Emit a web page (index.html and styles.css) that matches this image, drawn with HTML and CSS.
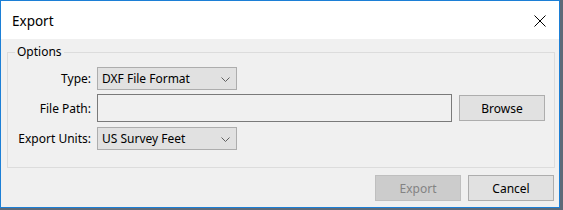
FILE: index.html
```html
<!DOCTYPE html>
<html>
<head>
<meta charset="utf-8">
<link rel="stylesheet" href="styles.css">
</head>
<body>
<div class="window">
  <div class="titlebar">
    <span class="title">Export</span>
    <span class="close">
      <svg width="12" height="12" viewBox="0 0 12 12"><path d="M0.5 0.5 L11.5 11.5 M11.5 0.5 L0.5 11.5" stroke="#000" stroke-width="1" fill="none"/></svg>
    </span>
  </div>
  <div class="content">
    <fieldset class="group">
      <legend class="legend">Options</legend>
      <div class="rows">
        <div class="row">
          <label class="label">Type:</label>
          <div class="select">
            <span class="select-text">DXF File Format</span>
            <svg class="chev" width="9" height="5" viewBox="0 0 9 5"><path d="M0.5 0.5 L4.5 4.5 L8.5 0.5" stroke="#606060" stroke-width="1" fill="none"/></svg>
          </div>
        </div>
        <div class="row">
          <label class="label">File Path:</label>
          <div class="path-field">
            <div class="input"></div>
            <div class="btn">Browse</div>
          </div>
        </div>
        <div class="row row-last">
          <label class="label">Export Units:</label>
          <div class="select">
            <span class="select-text">US Survey Feet</span>
            <svg class="chev" width="9" height="5" viewBox="0 0 9 5"><path d="M0.5 0.5 L4.5 4.5 L8.5 0.5" stroke="#606060" stroke-width="1" fill="none"/></svg>
          </div>
        </div>
      </div>
    </fieldset>
    <div class="actions">
      <div class="btn btn-disabled">Export</div>
      <div class="btn">Cancel</div>
    </div>
  </div>
</div>
</body>
</html>
```
FILE: styles.css
```css
html, body {
  margin: 0;
  padding: 0;
  background: #5e6a78;
  height: 210px;
  overflow: hidden;
}
body {
  font-family: "Segoe UI", "Noto Sans", "Open Sans", sans-serif;
  font-size: 12px;
  color: #000;
}
.window {
  width: 558px;
  height: 206px;
  border: 1px solid #1c7fd6;
  background: #f0f0f0;
  display: flex;
  flex-direction: column;
}
.titlebar {
  height: 38px;
  background: #fff;
  display: flex;
  align-items: center;
  justify-content: space-between;
  flex: none;
}
.title {
  font-size: 13.5px;
  padding-left: 11px;
  margin-top: 1px;
}
.close {
  width: 12px;
  height: 12px;
  margin-right: 13px;
  margin-top: 1px;
  display: flex;
}
.content {
  flex: 1;
  padding: 5px 4px 0 6px;
  display: flex;
  flex-direction: column;
}
.group {
  margin: 0;
  border: 1px solid #dcdcdc;
  padding: 7px 0 17px 0;
  min-width: 0;
}
.legend {
  padding: 0 2px;
  margin-left: 7px;
  line-height: 16px;
}
.rows {
  display: flex;
  flex-direction: column;
  gap: 4px;
}
.row {
  display: flex;
  align-items: center;
  gap: 6px;
}
.row-last {
  margin-top: 1px;
}
.label {
  width: 83px;
  text-align: right;
  flex: none;
}
.select {
  height: 21px;
  border: 1px solid #adadad;
  background: #e1e1e1;
  display: flex;
  align-items: center;
  justify-content: space-between;
  padding: 0 6px 0 4px;
  box-sizing: content-box;
  width: 128px;
}
.select-text {
  white-space: nowrap;
}
.chev {
  flex: none;
  margin-top: 1px;
}
.path-field {
  display: flex;
  align-items: center;
  gap: 7px;
}
.input {
  width: 353px;
  height: 26px;
  border: 1px solid #7a7a7a;
  background: #f0f0f0;
}
.btn {
  width: 84px;
  height: 24px;
  border: 1px solid #adadad;
  background: #e1e1e1;
  display: flex;
  align-items: center;
  justify-content: center;
}
.btn-disabled {
  background: #cccccc;
  border-color: #bfbfbf;
  color: #838383;
}
.actions {
  display: flex;
  justify-content: flex-end;
  gap: 7px;
  margin-top: 7px;
  padding-right: 1px;
}
```
